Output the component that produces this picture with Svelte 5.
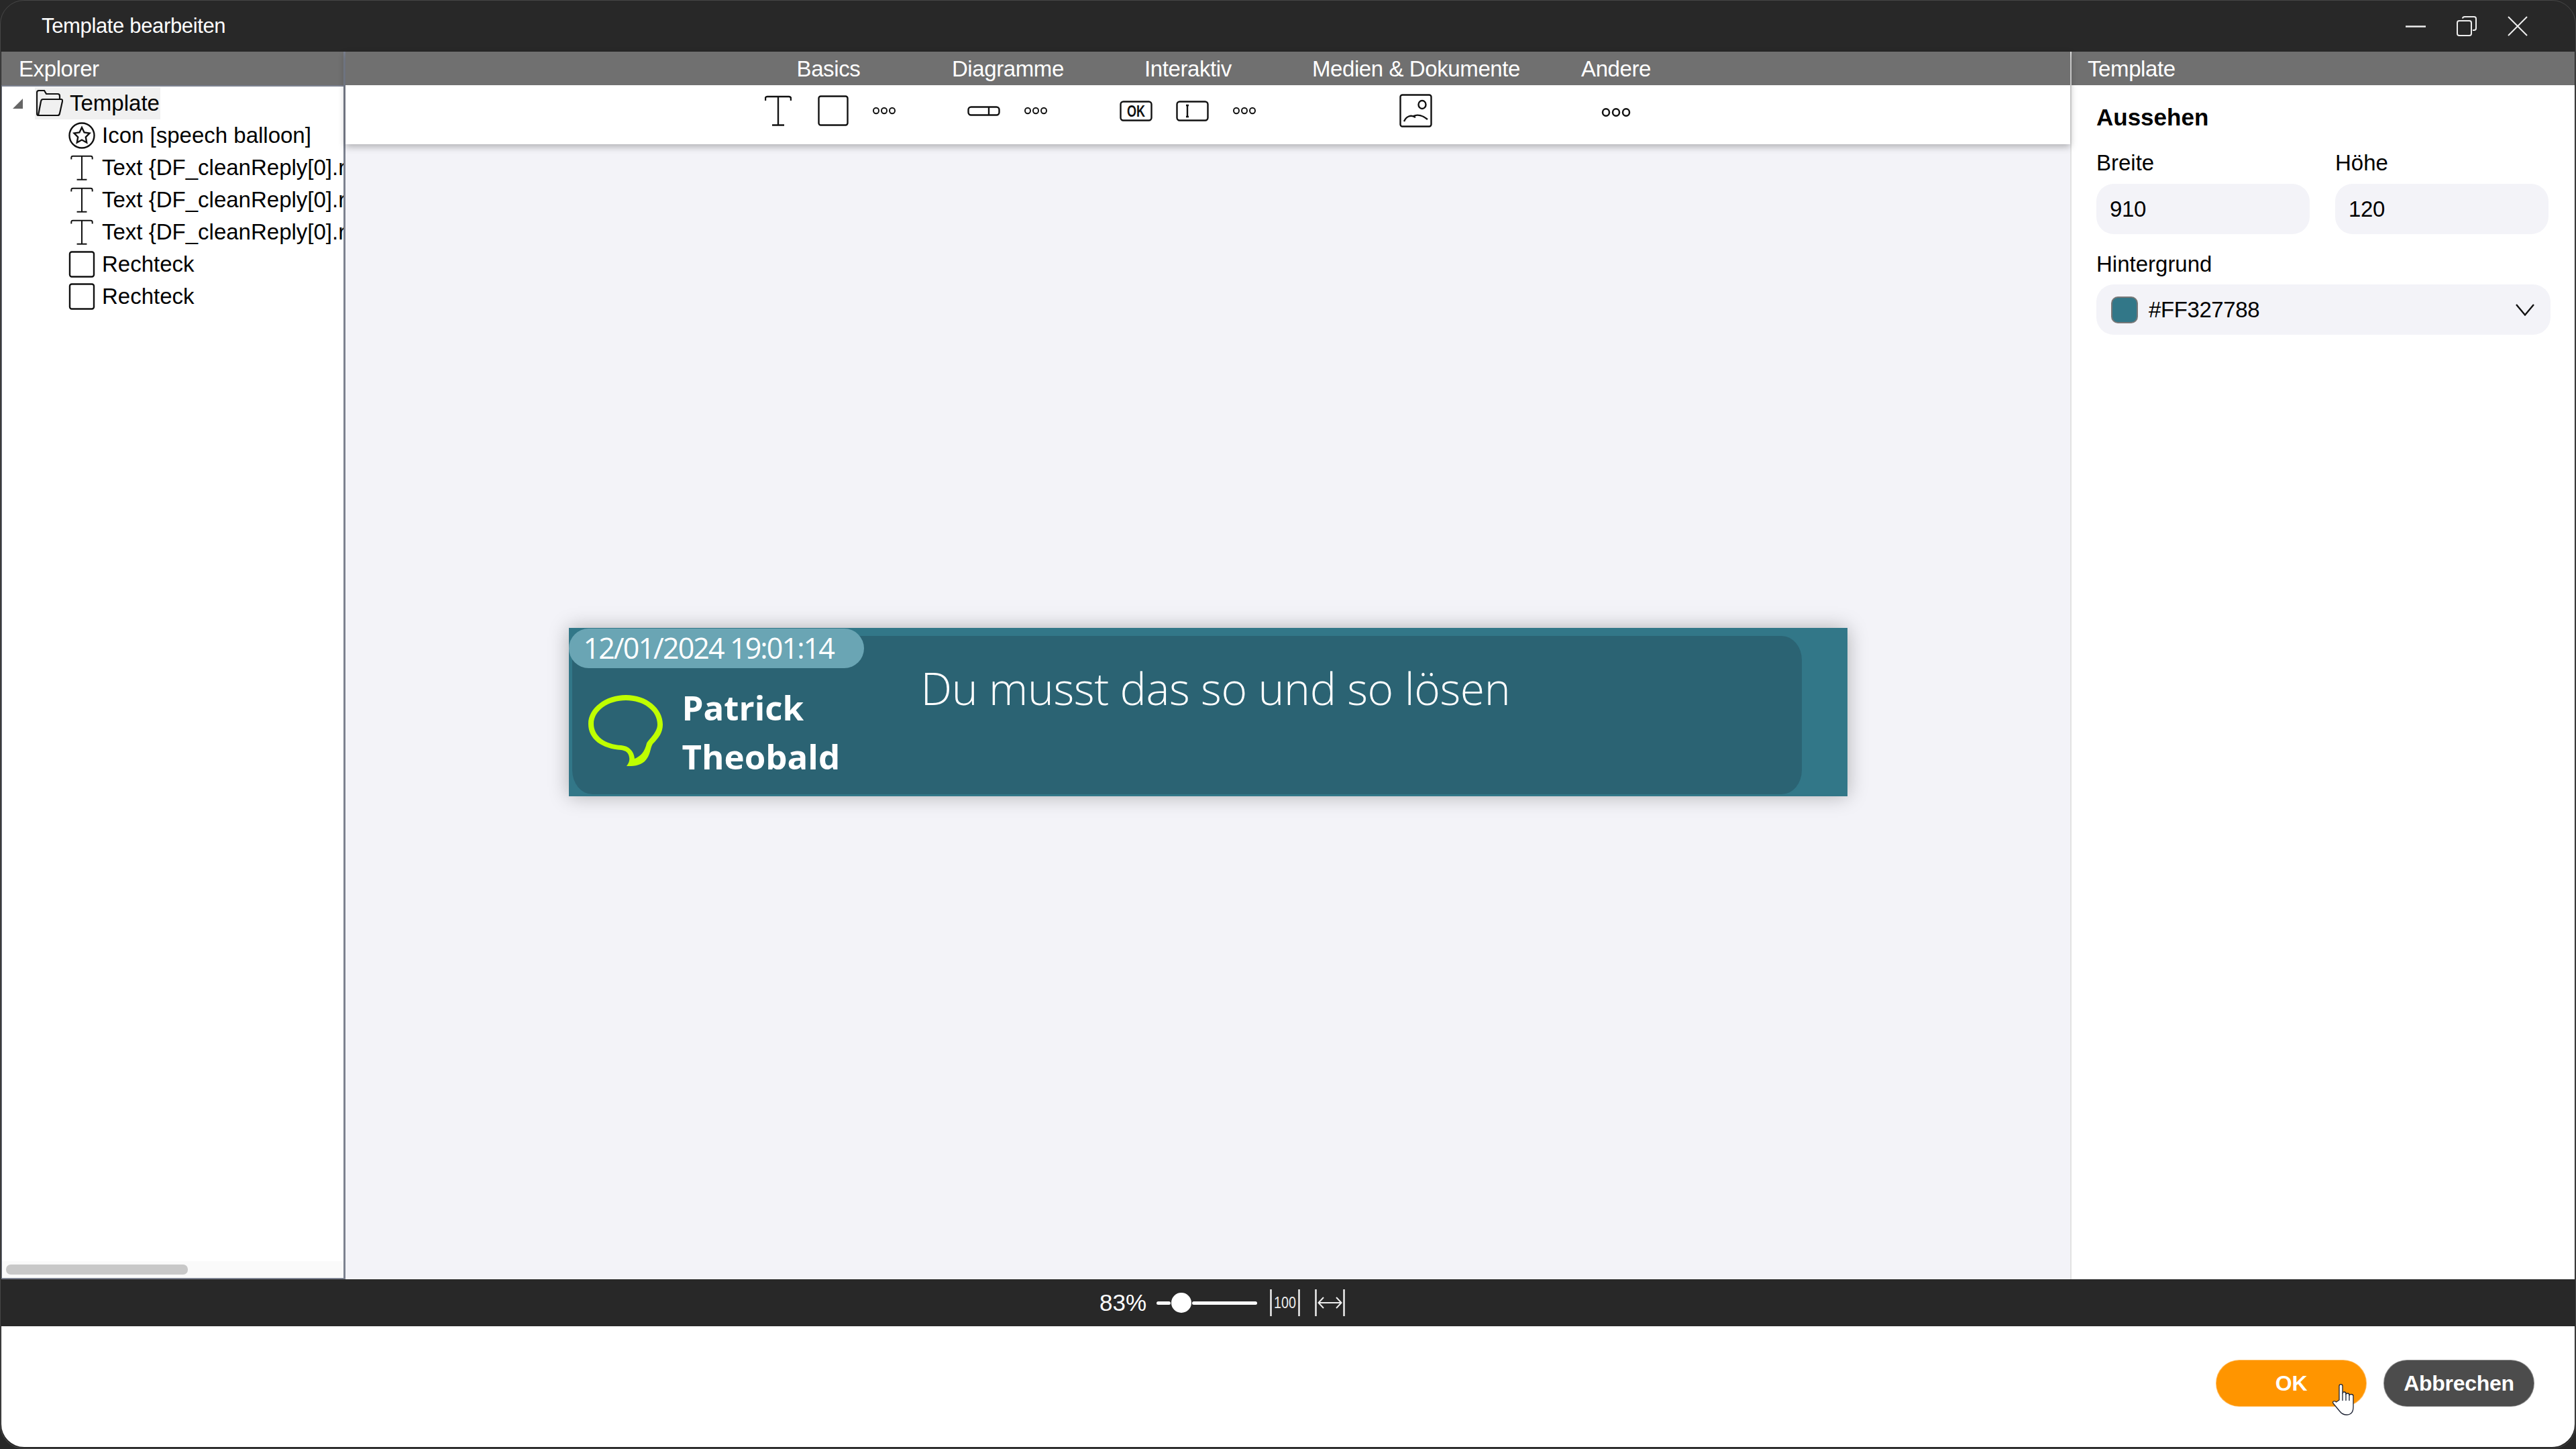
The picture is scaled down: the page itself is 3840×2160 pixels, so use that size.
<script lang="ts">
  const tree = [
    { icon: 'star', label: 'Icon [speech balloon]' },
    { icon: 'text', label: 'Text {DF_cleanReply[0].reply}' },
    { icon: 'text', label: 'Text {DF_cleanReply[0].reply}' },
    { icon: 'text', label: 'Text {DF_cleanReply[0].reply}' },
    { icon: 'rect', label: 'Rechteck' },
    { icon: 'rect', label: 'Rechteck' }
  ];
</script>

{#snippet dots(big = false)}
  <svg class={big ? 'dots dots--big' : 'dots'} viewBox="0 0 36 12" fill="none" stroke="#111" stroke-width="2">
    <ellipse cx="6" cy="6" rx="4" ry="4.2" /><ellipse cx="18" cy="6" rx="4" ry="4.2" /><ellipse cx="30" cy="6" rx="4" ry="4.2" />
  </svg>
{/snippet}

{#snippet textIcon(cls)}
  <svg class={cls} viewBox="0 0 40 46" fill="none" stroke="#111" stroke-width="2.400">
    <path d="M1 8V5Q1 2 4 2H36Q39 2 39 5V8M20 2V44M11 44.500H29" />
  </svg>
{/snippet}

<div class="window">
  <header class="titlebar">
    <span class="titlebar__title">Template bearbeiten</span>
    <div class="winctl">
      <svg viewBox="0 0 30 30" fill="none" stroke="#eee" stroke-width="2.500"><path d="M0 15.500H30" /></svg>
      <svg viewBox="0 0 30 30" fill="none" stroke="#eee" stroke-width="2"><rect x="1" y="7" width="21" height="22" rx="3" /><path d="M9 3.500Q9 1 12 1H26Q29 1 29 4V18Q29 21 26 21H24" /></svg>
      <svg viewBox="0 0 30 30" fill="none" stroke="#eee" stroke-width="2"><path d="M1 1L29 29M29 1L1 29" /></svg>
    </div>
  </header>

  <div class="body">
    <aside class="explorer">
      <div class="band">Explorer</div>
      <div class="tree">
        <div class="tree__root">
          <svg class="tree__caret" viewBox="0 0 15 15"><path d="M15 0V15H0Z" fill="#666" /></svg>
          <span class="tree__sel">
            <svg class="tree__folder" viewBox="0 0 40 40" fill="none" stroke="#111" stroke-width="2.200">
              <path d="M3 38Q1 38 1 35V4Q1 1 4 1H12L15 6H32Q35 6 35 9V14" />
              <path d="M3 38H32Q34.500 38 35 35L39 17Q39.500 14 37 14H10Q7.500 14 7 17L3 38Z" />
            </svg>
            Template
          </span>
        </div>
        {#each tree as row}
          <div class="tree__row">
            {#if row.icon === 'star'}
              <svg class="tree__icon" viewBox="0 0 40 40" fill="none" stroke="#111" stroke-width="2.400">
                <circle cx="20" cy="20" r="18.500" />
                <path d="M20 8L23.600 15.500L31.500 16.600L25.800 22.300L27.200 30.500L20 26.500L12.800 30.500L14.200 22.300L8.500 16.600L16.400 15.500Z" />
              </svg>
            {:else if row.icon === 'text'}
              {@render textIcon('tree__icon tree__icon--t')}
            {:else}
              <svg class="tree__icon" viewBox="0 0 40 40" fill="none" stroke="#111" stroke-width="2.400"><rect x="2" y="1.500" width="36" height="37" rx="3" /></svg>
            {/if}
            <span class="tree__label">{row.label}</span>
          </div>
        {/each}
      </div>
      <div class="hscroll"><div class="hscroll__thumb"></div></div>
    </aside>

    <main class="center">
      <div class="ribbon">
        <section class="group">
          <div class="group__label">Basics</div>
          <div class="group__tools">
            {@render textIcon('tool tool--t')}
            <svg class="tool tool--rect" viewBox="0 0 46 46" fill="none" stroke="#111" stroke-width="2.400"><rect x="1.500" y="1.500" width="43" height="43" rx="3" /></svg>
            {@render dots()}
          </div>
        </section>
        <section class="group">
          <div class="group__label">Diagramme</div>
          <div class="group__tools">
            <svg class="tool tool--bar" viewBox="0 0 49 15" fill="none" stroke="#111" stroke-width="2.400"><rect x="1.500" y="1.500" width="46" height="12" rx="4" /><path d="M32 1.500V13.500" /></svg>
            {@render dots()}
          </div>
        </section>
        <section class="group">
          <div class="group__label">Interaktiv</div>
          <div class="group__tools">
            <svg class="tool tool--btn" viewBox="0 0 49 31" fill="none" stroke="#111" stroke-width="2.400">
              <rect x="1.500" y="1.500" width="46" height="28" rx="4" />
              <text x="24.500" y="24" text-anchor="middle" textLength="27" lengthAdjust="spacingAndGlyphs" class="tool__ok">OK</text>
            </svg>
            <svg class="tool tool--btn" viewBox="0 0 49 31" fill="none" stroke="#111" stroke-width="2.400">
              <rect x="1.500" y="1.500" width="46" height="28" rx="4" />
              <path d="M15 7H19M15 24H19M17 7V24" />
            </svg>
            {@render dots()}
          </div>
        </section>
        <section class="group">
          <div class="group__label">Medien &amp; Dokumente</div>
          <div class="group__tools">
            <svg class="tool tool--img" viewBox="0 0 49 50" fill="none" stroke="#111" stroke-width="2.400">
              <rect x="1.500" y="1.500" width="46" height="47" rx="3" />
              <ellipse cx="34" cy="16" rx="5.500" ry="6" />
              <path d="M7 41C10 34 17 30 24 35M21 33C27 30 35 32 42 38" />
            </svg>
          </div>
        </section>
        <section class="group">
          <div class="group__label">Andere</div>
          <div class="group__tools group__tools--low">{@render dots(true)}</div>
        </section>
      </div>

      <div class="canvas">
        <article class="card">
          <div class="card__inner"></div>
          <div class="card__date">12/01/2024 19:01:14</div>
          <svg class="card__balloon" viewBox="0 0 111 107">
            <path fill="#bfff00" fill-rule="evenodd" d="M56 0C87 0 111 20 111 44C111 56 105 64 96 73C92 79 93 90 84 99C76 106 66 106 57 106C60 102 62 98 61 93C60 86 56 83 49 82C20 80 0 66 0 43C0 20 25 0 56 0ZM56 8C30 8 8 23 8 43C8 61 25 74 49 75C60 76 68 83 69 95C78 91 84 85 87 72C90 66 103 56 103 44C103 23 82 8 56 8Z" />
          </svg>
          <div class="card__name">Patrick<br />Theobald</div>
          <div class="card__msg">Du musst das so und so lösen</div>
        </article>
      </div>
    </main>

    <aside class="props">
      <div class="band band--props">Template</div>
      <div class="props__content">
        <h2 class="props__heading">Aussehen</h2>
        <div class="props__pair">
          <div class="field">
            <span class="field__label">Breite</span>
            <div class="field__box">910</div>
          </div>
          <div class="field">
            <span class="field__label">Höhe</span>
            <div class="field__box">120</div>
          </div>
        </div>
        <div class="field field--bg">
          <span class="field__label">Hintergrund</span>
          <div class="field__box field__box--select">
            <span class="swatch"></span>
            <span class="field__value">#FF327788</span>
            <svg class="chevron" viewBox="0 0 28 18" fill="none" stroke="#111" stroke-width="2.400"><path d="M1 1L14 16.500L27 1" /></svg>
          </div>
        </div>
      </div>
    </aside>
  </div>

  <div class="zoombar">
    <span class="zoombar__pct">83%</span>
    <div class="slider"><span class="slider__track slider__track--a"></span><span class="slider__thumb"></span><span class="slider__track slider__track--b"></span></div>
    <svg class="zoombar__icon" viewBox="0 0 45 42" fill="none" stroke="#eee" stroke-width="2.500">
      <path d="M1.500 1V41M43.500 1V41" />
      <text x="22.500" y="29" text-anchor="middle" textLength="33" lengthAdjust="spacingAndGlyphs" class="zoombar__hundred">100</text>
    </svg>
    <svg class="zoombar__icon" viewBox="0 0 45 42" fill="none" stroke="#eee" stroke-width="2.500">
      <path d="M1.500 1V41M43.500 1V41" />
      <path stroke-width="2" d="M6 21H39M13 13L5.500 21L13 29M32 13L39.500 21L32 29" />
    </svg>
  </div>

  <footer class="footer">
    <button class="btn btn--ok" type="button">OK</button>
    <button class="btn btn--cancel" type="button">Abbrechen</button>
  </footer>

  <svg class="cursor" viewBox="0 0 34 47">
    <path fill="#fff" stroke="#1c2233" stroke-width="1.300" stroke-linejoin="round" d="M10 24V3Q10 .7 12.500 .7Q15 .7 15 3V14Q15 12 17.500 12Q20 12 20 14.500V15.500Q20 14 22.500 14Q25 14 25 16.500V17Q25 15.500 28 15.500Q31 15.500 31 18V34Q31 46 21 46Q15 46 11 41L1.500 29.500Q-.5 27 1.500 26Q3.500 25 5.500 27Z" />
    <path fill="none" stroke="#1c2233" stroke-width="1.300" d="M15 14V25M20 15V25M25 17V25" />
  </svg>
</div>

<style>
  :global(body) {
    background: #282828;
  }

  .window {
    position: relative;
    display: flex;
    flex-direction: column;
    width: 3840px;
    height: 2160px;
    overflow: hidden;
    background: #282828;
    font-family: "Liberation Sans", Arial, sans-serif;
    color: #000;
  }

  /* thin outline of the rounded window, only visible in the corners */
  .window::after {
    content: "";
    position: absolute;
    inset: 0;
    border: 1px solid rgba(255, 255, 255, 0.14);
    border-radius: 36px;
    pointer-events: none;
  }

  .titlebar {
    flex: 0 0 77px;
    display: flex;
    align-items: center;
    justify-content: space-between;
    padding: 0 72px 0 62px;
    box-sizing: border-box;
    color: #fff;
    font-size: 31px;
    letter-spacing: -0.35px;
  }

  .winctl {
    display: flex;
    gap: 46px;
  }

  .winctl svg {
    width: 30px;
    height: 30px;
  }

  .body {
    flex: 0 0 1830px;
    display: flex;
    min-height: 0;
    margin: 0 2px;
    background: #f3f3f8;
  }

  .band {
    flex: 0 0 50px;
    height: 50px;
    line-height: 52px;
    background: #707070;
    color: #fff;
    font-size: 33px;
    padding-left: 26px;
    letter-spacing: -0.4px;
    box-sizing: border-box;
  }

  .explorer {
    flex: 0 0 513px;
    min-width: 0;
    overflow: hidden;
    display: flex;
    flex-direction: column;
    box-sizing: border-box;
    background: #fff;
    border-right: 3px solid #7c8290;
  }

  .tree {
    flex: 1;
    min-height: 0;
    overflow: hidden;
    border-left: 1px solid #7c8290;
    border-top: 2px solid #7c8290;
    padding-top: 1px;
    font-size: 33px;
  }

  .tree__root {
    display: flex;
    align-items: center;
    height: 48px;
    padding-left: 16px;
  }

  .tree__caret {
    width: 15px;
    height: 15px;
    margin-right: 18px;
  }

  .tree__sel {
    display: flex;
    align-items: center;
    gap: 10px;
    height: 48px;
    background: #f0f0f0;
    padding-right: 1px;
  }

  .tree__folder {
    width: 40px;
    height: 40px;
    margin-left: 2px;
  }

  .tree__row {
    display: flex;
    align-items: center;
    gap: 10px;
    height: 48px;
    padding-left: 99px;
    white-space: nowrap;
  }

  .tree__icon {
    flex: 0 0 40px;
    width: 40px;
    height: 40px;
  }

  .tree__icon--t {
    height: 38px;
  }

  .hscroll {
    flex: 0 0 27px;
    box-sizing: border-box;
    background: #fafafa;
    border-left: 1px solid #7c8290;
    border-bottom: 2px solid #7c8290;
    padding: 5px 0 0 6px;
  }

  .hscroll__thumb {
    width: 271px;
    height: 15px;
    border-radius: 7px;
    background: #c8c8c8;
  }

  .center {
    flex: 1;
    min-width: 0;
    display: flex;
    flex-direction: column;
  }

  .ribbon {
    flex: 0 0 138px;
    display: flex;
    justify-content: center;
    gap: 83px;
    background: linear-gradient(#707070 50px, #fff 50px);
    box-shadow: 0 4px 10px rgba(0, 0, 0, 0.28);
    position: relative;
  }

  .group:nth-child(5) {
    margin-left: 8px;
  }

  .group:first-child .group__label {
    margin-left: -6px;
  }

  .group__label {
    height: 50px;
    line-height: 52px;
    text-align: center;
    color: #fff;
    font-size: 33px;
    letter-spacing: -0.4px;
    white-space: nowrap;
  }

  .group__tools {
    display: flex;
    align-items: center;
    justify-content: center;
    gap: 35px;
    height: 76px;
  }

  .group__tools--low {
    height: 80px;
  }

  .tool--t {
    width: 40px;
    height: 46px;
    margin-right: 4px;
  }

  .tool--rect {
    width: 46px;
    height: 46px;
  }

  .tool--bar {
    width: 49px;
    height: 15px;
  }

  .tool--btn {
    width: 49px;
    height: 31px;
  }

  .tool--img {
    width: 49px;
    height: 50px;
  }

  .tool__ok {
    font-family: "Liberation Sans", sans-serif;
    font-size: 24px;
    font-weight: 700;
    fill: #111;
    stroke: none;
  }

  .dots {
    width: 36px;
    height: 12px;
  }

  .dots--big {
    width: 46px;
    height: 15px;
  }

  .canvas {
    flex: 1;
    min-height: 0;
    display: flex;
    align-items: center;
    justify-content: center;
  }

  .card {
    position: relative;
    width: 1906px;
    height: 251px;
    background: #327788;
    color: #fff;
    font-family: "Open Sans", "Noto Sans", sans-serif;
    box-shadow: 0 0 28px rgba(0, 0, 0, 0.28);
  }

  .card__inner {
    position: absolute;
    left: 5px;
    top: 12px;
    width: 1833px;
    height: 236px;
    background: #2b6373;
    border-radius: 30px / 36px;
  }

  .card__date {
    position: absolute;
    left: 0;
    top: 1px;
    width: 440px;
    height: 59px;
    box-sizing: border-box;
    padding-left: 22px;
    line-height: 58px;
    border-radius: 30px;
    background: #6aa5b4;
    font-size: 43px;
    font-weight: 400;
    letter-spacing: -1.9px;
    white-space: nowrap;
  }

  .card__balloon {
    position: absolute;
    left: 29px;
    top: 100px;
    width: 111px;
    height: 107px;
  }

  .card__name {
    position: absolute;
    left: 169px;
    top: 82px;
    font-size: 51px;
    line-height: 73px;
    font-weight: 700;
    white-space: nowrap;
  }

  .card__msg {
    position: absolute;
    left: 525px;
    top: 44px;
    font-size: 66px;
    font-weight: 300;
    line-height: 90px;
    letter-spacing: -0.4px;
    white-space: nowrap;
  }

  .props {
    flex: 0 0 752px;
    display: flex;
    flex-direction: column;
    box-sizing: border-box;
    background: #fff;
    border-left: 2px solid #e2e2e2;
  }

  .band--props {
    padding-left: 24px;
  }

  .props__content {
    padding: 30px 36px 0 37px;
    font-size: 33px;
  }

  .props__heading {
    margin: 0;
    font-size: 35px;
    line-height: 36px;
    font-weight: 700;
  }

  .props__pair {
    display: grid;
    grid-template-columns: 318px 318px;
    column-gap: 38px;
    margin-top: 32px;
  }

  .field {
    display: flex;
    flex-direction: column;
    gap: 13px;
  }

  .field--bg {
    margin-top: 27px;
    gap: 12px;
  }

  .field__label {
    line-height: 36px;
  }

  .field__box {
    height: 75px;
    line-height: 75px;
    padding-left: 20px;
    border-radius: 26px;
    background: #f3f3f8;
    box-sizing: border-box;
    letter-spacing: -0.4px;
  }

  .field__box--select {
    display: flex;
    align-items: center;
    gap: 16px;
    padding: 0 24px 0 22px;
  }

  .swatch {
    width: 40px;
    height: 40px;
    box-sizing: border-box;
    border-radius: 10px;
    background: #327788;
    border: 2px solid #777;
  }

  .chevron {
    width: 28px;
    height: 18px;
    margin-left: auto;
  }

  .zoombar {
    flex: 0 0 70px;
    display: flex;
    align-items: center;
    padding-left: 1639px;
    box-sizing: border-box;
    color: #fff;
  }

  .zoombar__pct {
    font-size: 35px;
    width: 85px;
  }

  .slider {
    display: flex;
    align-items: center;
    width: 150px;
    margin-right: 19px;
  }

  .slider__track {
    height: 5px;
    border-radius: 3px;
    background: #fff;
  }

  .slider__track--a {
    width: 21px;
  }

  .slider__track--b {
    flex: 1;
  }

  .slider__thumb {
    width: 30px;
    height: 30px;
    margin: 0 1px;
    border-radius: 50%;
    background: #fff;
  }

  .zoombar__icon {
    width: 45px;
    height: 42px;
    margin-right: 22px;
  }

  .zoombar__hundred {
    font-family: "Liberation Sans", sans-serif;
    font-size: 24px;
    fill: #eee;
    stroke: none;
  }

  .footer {
    flex: 0 0 180px;
    display: flex;
    align-items: flex-start;
    justify-content: flex-end;
    gap: 25px;
    margin: 0 2px 3px;
    padding: 50px 60px 0 0;
    box-sizing: border-box;
    background: #fff;
    border-radius: 0 0 34px 34px;
  }

  .btn {
    width: 225px;
    height: 70px;
    border-radius: 35px;
    border: 1px solid rgba(255, 255, 255, 0.35);
    color: #fff;
    font-family: inherit;
    font-size: 32px;
    font-weight: 700;
    letter-spacing: -0.3px;
    padding: 0;
  }

  .btn--ok {
    background: #ff9500;
  }

  .btn--cancel {
    background: #4c4c4c;
  }

  .cursor {
    position: absolute;
    left: 3477px;
    top: 2063px;
    width: 34px;
    height: 47px;
  }
</style>
